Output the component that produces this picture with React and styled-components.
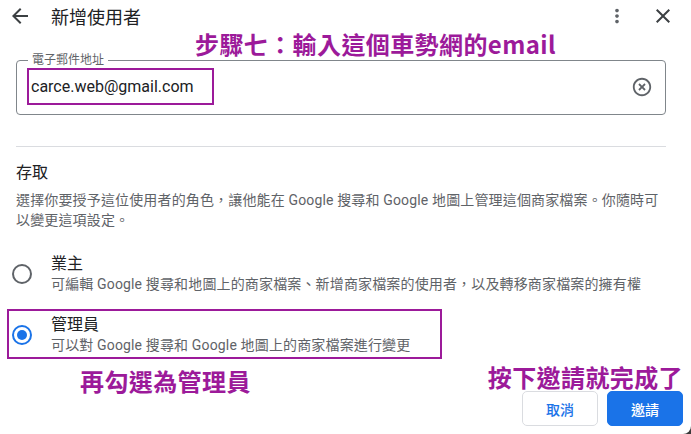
import React from 'react';
import styled, { createGlobalStyle } from 'styled-components';
import { MdArrowBack, MdMoreVert, MdClose, MdHighlightOff } from 'react-icons/md';

const GlobalStyle = createGlobalStyle`
  html, body {
    margin: 0;
    padding: 0;
    background: #3a3a3a;
  }
  * {
    box-sizing: border-box;
  }
`;

const Dialog = styled.div`
  width: 691px;
  height: 434px;
  background: #fff;
  border-bottom-right-radius: 8px;
  overflow: hidden;
  font-family: Roboto, "Noto Sans CJK TC", sans-serif;
  color: #202124;
  display: flex;
  flex-direction: column;
`;

const Header = styled.div`
  height: 30px;
  display: flex;
  align-items: center;
  padding: 2px 16px 0 8px;
`;

const IconBtn = styled.span`
  display: flex;
  align-items: center;
  justify-content: center;
  color: ${p => p.$color || '#3c4043'};
  font-size: ${p => p.$size || 24}px;
  margin-left: ${p => p.$ml || 0}px;
`;

const Title = styled.div`
  font-size: 18px;
  margin-left: 19px;
  flex: 1;
  color: #202124;
`;

const Note = styled.div`
  font-size: 24px;
  font-weight: 700;
  line-height: 28px;
  letter-spacing: 0.4px;
  color: #9c1a9a;
  font-family: "Noto Sans CJK TC", sans-serif;
  padding-left: ${p => p.$pl || 0}px;
  margin-top: ${p => p.$mt || 0}px;
  white-space: nowrap;
`;

const Body = styled.div`
  padding: 0 25px 0 16px;
`;

const Field = styled.div`
  position: relative;
  margin-top: 2px;
  height: 55px;
  border: 1px solid #80868b;
  border-radius: 4px;
  display: flex;
  align-items: center;
  justify-content: space-between;
  padding: 0 12px 2px 10px;
`;

const FieldLabel = styled.span`
  position: absolute;
  top: -8px;
  left: 11px;
  padding: 0 4px;
  background: #fff;
  font-size: 12px;
  line-height: 14px;
  color: #5f6368;
`;

const Mark = styled.span`
  border: 2px solid #9c1a9a;
  height: 37px;
  padding: 0 18px 0 2px;
  display: flex;
  align-items: center;
  font-size: 16px;
  color: #202124;
`;

const Divider = styled.hr`
  border: none;
  border-top: 1px solid #dadce0;
  margin: 31px 0 0;
`;

const SectionTitle = styled.div`
  font-size: 16px;
  line-height: 24px;
  margin-top: 14px;
`;

const Desc = styled.div`
  font-size: 14px;
  line-height: 20px;
  letter-spacing: 0.15px;
  color: #5f6368;
  margin-top: 5px;
`;

const RoleRow = styled.div`
  display: flex;
  align-items: center;
  margin-left: -9px;
  margin-top: ${p => p.$mt}px;
  border: 2px solid ${p => (p.$marked ? '#9c1a9a' : 'transparent')};
  padding: 3px 30px 2px 3px;
  width: ${p => (p.$marked ? 'fit-content' : 'auto')};
`;

const Radio = styled.span`
  width: 20px;
  height: 20px;
  flex: none;
  border-radius: 50%;
  border: 2px solid ${p => (p.$checked ? '#1a73e8' : '#5f6368')};
  display: flex;
  align-items: center;
  justify-content: center;
  margin-right: 19px;
  &::after {
    content: '';
    width: 10px;
    height: 10px;
    border-radius: 50%;
    background: ${p => (p.$checked ? '#1a73e8' : 'transparent')};
  }
`;

const RoleText = styled.div`
  display: flex;
  flex-direction: column;
`;

const RoleName = styled.div`
  font-size: 16px;
  line-height: 22px;
  color: #202124;
`;

const RoleDesc = styled.div`
  font-size: 14px;
  line-height: 19px;
  letter-spacing: 0.15px;
  color: #5f6368;
  white-space: nowrap;
`;

const Footer = styled.div`
  display: flex;
  justify-content: space-between;
  padding-right: 8px;
`;

const RightCol = styled.div`
  display: flex;
  flex-direction: column;
  align-items: flex-end;
`;

const Buttons = styled.div`
  display: flex;
  gap: 9px;
`;

const Button = styled.button`
  width: 76px;
  height: 35px;
  border-radius: 5px;
  font-family: Roboto, "Noto Sans CJK TC", sans-serif;
  font-size: 14px;
  font-weight: 500;
  border: 1px solid ${p => (p.$primary ? '#1a73e8' : '#dadce0')};
  background: ${p => (p.$primary ? '#1a73e8' : '#fff')};
  color: ${p => (p.$primary ? '#fff' : '#1a73e8')};
`;

export default function App() {
  return (
    <>
      <GlobalStyle />
      <Dialog>
        <Header>
          <IconBtn><MdArrowBack /></IconBtn>
          <Title>新增使用者</Title>
          <IconBtn $size={22} $color="#5f6368"><MdMoreVert /></IconBtn>
          <IconBtn $size={24} $ml={23}><MdClose /></IconBtn>
        </Header>
        <Note $pl={195}>步驟七：輸入這個車勢網的email</Note>
        <Body>
          <Field>
            <FieldLabel>電子郵件地址</FieldLabel>
            <Mark>carce.web@gmail.com</Mark>
            <IconBtn $size={22} $color="#5f6368"><MdHighlightOff /></IconBtn>
          </Field>
          <Divider />
          <SectionTitle>存取</SectionTitle>
          <Desc>
            選擇你要授予這位使用者的角色，讓他能在 Google 搜尋和 Google 地圖上管理這個商家檔案。你隨時可以變更這項設定。
          </Desc>
          <RoleRow $mt={18}>
            <Radio />
            <RoleText>
              <RoleName>業主</RoleName>
              <RoleDesc>可編輯 Google 搜尋和地圖上的商家檔案、新增商家檔案的使用者，以及轉移商家檔案的擁有權</RoleDesc>
            </RoleText>
          </RoleRow>
          <RoleRow $mt={11} $marked>
            <Radio $checked />
            <RoleText>
              <RoleName>管理員</RoleName>
              <RoleDesc>可以對 Google 搜尋和 Google 地圖上的商家檔案進行變更</RoleDesc>
            </RoleText>
          </RoleRow>
        </Body>
        <Footer>
          <Note $pl={80} $mt={8}>再勾選為管理員</Note>
          <RightCol>
            <Note $mt={4}>按下邀請就完成了</Note>
            <Buttons>
              <Button>取消</Button>
              <Button $primary>邀請</Button>
            </Buttons>
          </RightCol>
        </Footer>
      </Dialog>
    </>
  );
}
